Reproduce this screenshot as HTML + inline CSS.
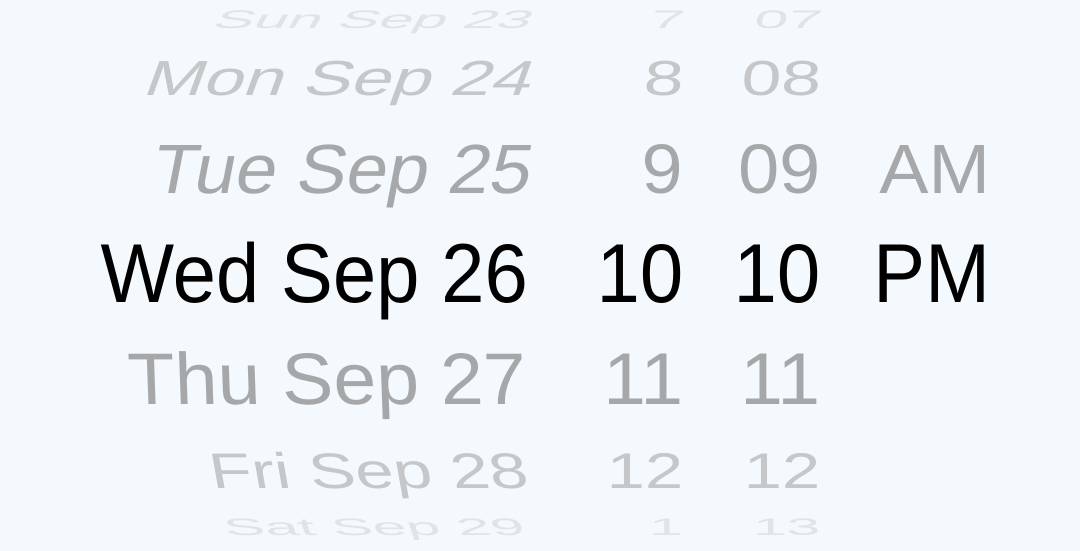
<!DOCTYPE html>
<html><head><meta charset="utf-8"><style>
html,body{margin:0;padding:0;}
body{width:1080px;height:551px;background:#f3f9fc;overflow:hidden;position:relative;font-family:"Liberation Sans",Arial,sans-serif;}
.c{position:absolute;font-size:82px;line-height:82px;height:82px;white-space:nowrap;transform-origin:100% 68px;--k:0deg;transform:skewX(var(--k)) scale(var(--sx),var(--sy));}
.r0{top:-40px;color:#e1e4e6;--sx:0.74;--sy:0.31;}
.r1{top:27px;color:#c5c7c9;--sx:0.875;--sy:0.6;}
.r2{top:125px;color:#a6a8a9;--sx:0.9;--sy:0.85;}
.r3{top:234px;color:#000;--sx:0.95;--sy:1.02;}
.r4{top:336px;color:#a6a7a8;--sx:0.94;--sy:0.89;}
.r5{top:420px;color:#c5c7c9;--sx:0.84;--sy:0.61;}
.r6{top:467px;color:#e1e4e6;--sx:0.74;--sy:0.29;}
.d{right:552px;}
.r0.d{--k:-30deg;}.r1.d{--k:-20deg;}.r2.d{--k:-11deg;}.r4.d{--k:2deg;right:553px;}.r5.d{--k:10deg;right:550px;}.r6.d{--k:18deg;right:553px;}
.h{right:397px;}
.m{right:260px;}
.r0.h,.r0.m{--k:-12deg;}
.r1.h,.r1.m{--k:-4deg;}
.a{right:90px;}
</style></head><body>
<div class="c r0 d">Sun Sep 23</div><div class="c r0 h">7</div><div class="c r0 m">07</div>
<div class="c r1 d">Mon Sep 24</div><div class="c r1 h">8</div><div class="c r1 m">08</div>
<div class="c r2 d">Tue Sep 25</div><div class="c r2 h">9</div><div class="c r2 m">09</div><div class="c r2 a">AM</div>
<div class="c r3 d">Wed Sep 26</div><div class="c r3 h">10</div><div class="c r3 m">10</div><div class="c r3 a">PM</div>
<div class="c r4 d">Thu Sep 27</div><div class="c r4 h">11</div><div class="c r4 m">11</div>
<div class="c r5 d">Fri Sep 28</div><div class="c r5 h">12</div><div class="c r5 m">12</div>
<div class="c r6 d">Sat Sep 29</div><div class="c r6 h">1</div><div class="c r6 m">13</div>
</body></html>
